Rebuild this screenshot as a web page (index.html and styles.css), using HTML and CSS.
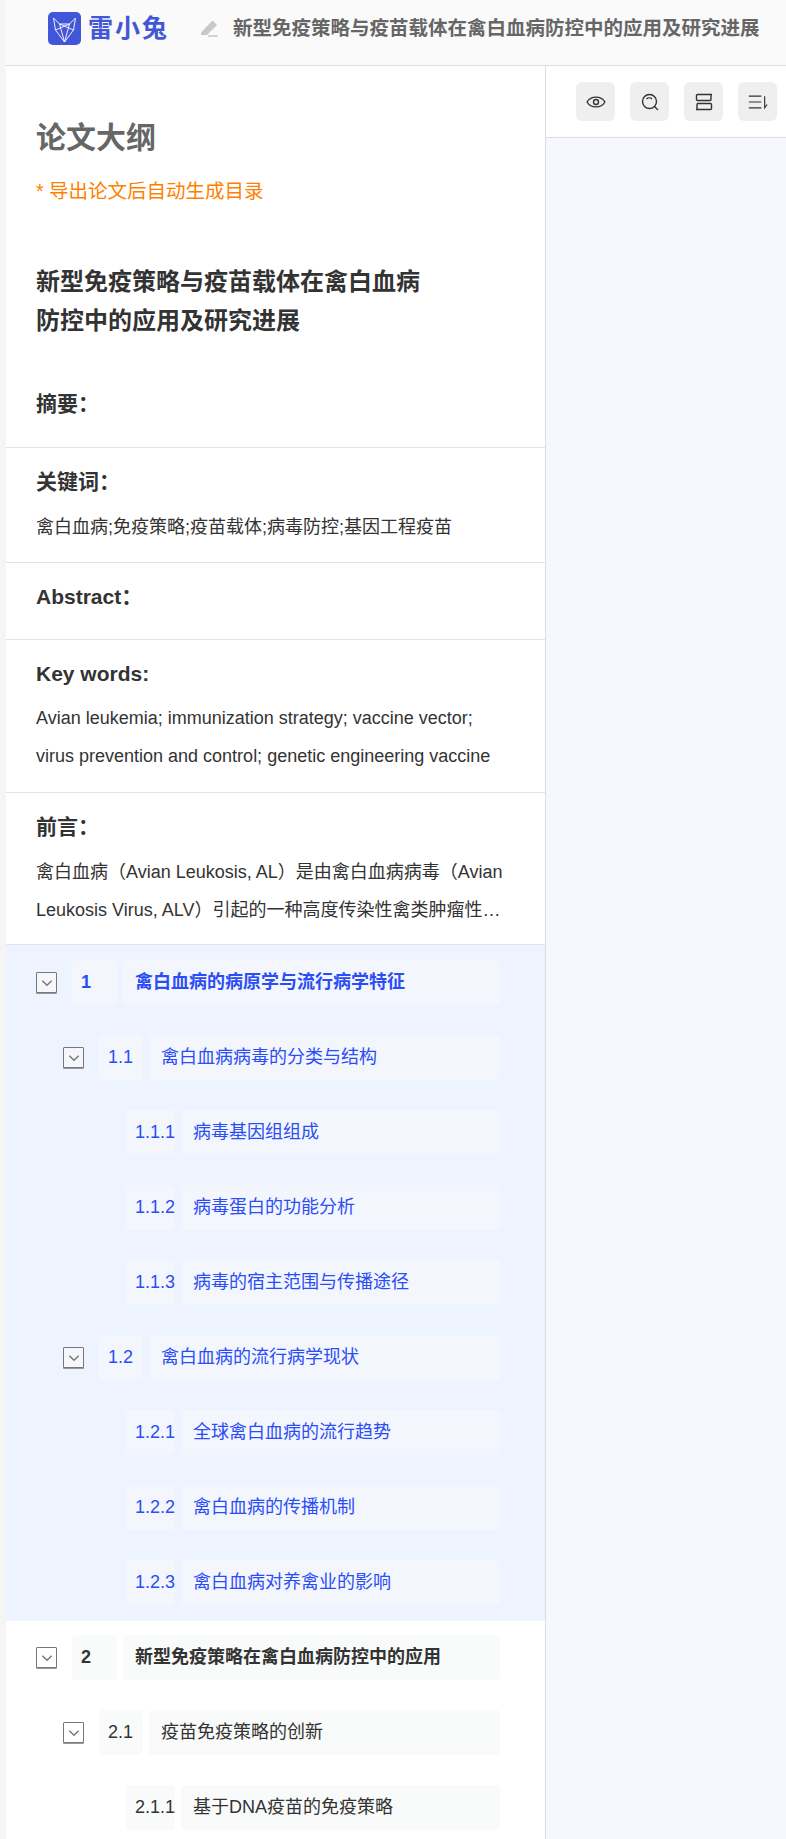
FILE: index.html
```html
<!DOCTYPE html>
<html lang="zh">
<head>
<meta charset="utf-8">
<title>雷小兔</title>
<link rel="stylesheet" href="styles.css">
</head>
<body>
<div class="app">
  <header class="topbar">
    <div class="brand">
      <svg class="logo" viewBox="0 0 33 33"><rect width="33" height="33" rx="5" fill="#4257d8"/><path d="M5.500 6l6 6h10l6-6-2 12-9 12-9-12zM11.500 12l5 18M21.500 12l-5 18M7.500 18l14-6M25.500 18l-14-6" fill="none" stroke="#fff" stroke-width=".9"/></svg>
      <span class="brand-name">雷小兔</span>
    </div>
    <svg class="pen" viewBox="0 0 18 18"><path d="M0 12.500L11.500.5 16 5 6 15H0z" fill="#c8c8c8"/><path d="M7 16h10" stroke="#c8c8c8" stroke-width="1.500"/></svg>
    <h1 class="doc-title">新型免疫策略与疫苗载体在禽白血病防控中的应用及研究进展</h1>
  </header>
  <div class="workspace">
    <aside class="outline">
      <div class="intro">
        <h2 class="outline-title">论文大纲</h2>
        <p class="hint">* 导出论文后自动生成目录</p>
        <h3 class="paper-title">新型免疫策略与疫苗载体在禽白血病<br>防控中的应用及研究进展</h3>
        <h4 class="label">摘要：</h4>
      </div>
      <section class="block block-kw">
        <h4 class="label">关键词：</h4>
        <p class="text">禽白血病;免疫策略;疫苗载体;病毒防控;基因工程疫苗</p>
      </section>
      <section class="block block-abs"><h4 class="label">Abstract：</h4></section>
      <section class="block block-en">
        <h4 class="label">Key words:</h4>
        <p class="text">Avian leukemia; immunization strategy; vaccine vector; virus prevention and control; genetic engineering vaccine</p>
      </section>
      <section class="block block-pre">
        <h4 class="label">前言：</h4>
        <p class="text clamp">禽白血病（Avian Leukosis, AL）是由禽白血病病毒（Avian Leukosis Virus, ALV）引起的一种高度传染性禽类肿瘤性疾病，对全球养禽业造成了严重的经济损失和防控压力。</p>
      </section>
      <div class="chapter active">
        <div class="row l1"><span class="toggle"><svg viewBox="0 0 12 12"><path d="M2 4l4 4 4-4"/></svg></span><span class="num">1</span><span class="name">禽白血病的病原学与流行病学特征</span></div>
        <div class="row l2"><span class="toggle"><svg viewBox="0 0 12 12"><path d="M2 4l4 4 4-4"/></svg></span><span class="num">1.1</span><span class="name">禽白血病病毒的分类与结构</span></div>
        <div class="row l3"><span class="num">1.1.1</span><span class="name">病毒基因组组成</span></div>
        <div class="row l3"><span class="num">1.1.2</span><span class="name">病毒蛋白的功能分析</span></div>
        <div class="row l3"><span class="num">1.1.3</span><span class="name">病毒的宿主范围与传播途径</span></div>
        <div class="row l2"><span class="toggle"><svg viewBox="0 0 12 12"><path d="M2 4l4 4 4-4"/></svg></span><span class="num">1.2</span><span class="name">禽白血病的流行病学现状</span></div>
        <div class="row l3"><span class="num">1.2.1</span><span class="name">全球禽白血病的流行趋势</span></div>
        <div class="row l3"><span class="num">1.2.2</span><span class="name">禽白血病的传播机制</span></div>
        <div class="row l3"><span class="num">1.2.3</span><span class="name">禽白血病对养禽业的影响</span></div>
      </div>
      <div class="chapter">
        <div class="row l1"><span class="toggle"><svg viewBox="0 0 12 12"><path d="M2 4l4 4 4-4"/></svg></span><span class="num">2</span><span class="name">新型免疫策略在禽白血病防控中的应用</span></div>
        <div class="row l2"><span class="toggle"><svg viewBox="0 0 12 12"><path d="M2 4l4 4 4-4"/></svg></span><span class="num">2.1</span><span class="name">疫苗免疫策略的创新</span></div>
        <div class="row l3"><span class="num">2.1.1</span><span class="name">基于DNA疫苗的免疫策略</span></div>
      </div>
    </aside>
    <main class="preview">
      <div class="tools">
        <button class="tool"><svg viewBox="0 0 20 20"><path d="M1 10c4-6.500 14-6.500 18 0-4 6.500-14 6.500-18 0z"/><circle cx="10" cy="10" r="2.500"/></svg></button>
        <button class="tool"><svg viewBox="0 0 20 20"><circle cx="9.500" cy="9.500" r="7"/><path d="M14.500 14.500l3.500 3.500M6.500 7c1.500-1.500 4-1.500 5.500 0"/></svg></button>
        <button class="tool"><svg viewBox="0 0 20 20"><path d="M18 2.500H3.500a1 1 0 0 0-1 1v4a1 1 0 0 0 1 1H16a1 1 0 0 0 1-1v-5zM3 11.500h13.500a1 1 0 0 1 1 1v4a1 1 0 0 1-1 1H2M3 11.500v6"/></svg></button>
        <button class="tool"><svg viewBox="0 0 24 20"><path d="M1 3h15M1 10h15M1 17h15M20 3v14l3-4"/></svg></button>
      </div>
      <div class="canvas"></div>
    </main>
  </div>
</div>
</body>
</html>
```
FILE: styles.css
```css
* { box-sizing: border-box; }
html, body { margin: 0; padding: 0; height: 100%; overflow: hidden; }
body { font-family: "Liberation Sans", "Noto Sans CJK SC", sans-serif; color: #333; background: #f5f5f5; }
.app { margin-left: 6px; height: 1839px; display: flex; flex-direction: column; background: #fff; }
.topbar { height: 66px; flex: none; display: flex; align-items: center; background: #fafafa; border-bottom: 1px solid #ddd; padding-left: 42px; padding-bottom: 8px; }
.brand { display: flex; align-items: center; gap: 7px; width: 153px; flex: none; }
.logo { width: 33px; height: 33px; flex: none; }
.brand-name { font-size: 25px; font-weight: 700; color: #4257d8; letter-spacing: 2px; line-height: 33px; white-space: nowrap; }
.pen { width: 18px; height: 18px; flex: none; }
.doc-title { margin: -1px 0 0 14px; font-size: 19.500px; font-weight: 700; color: #666; white-space: nowrap; line-height: 24px; }
.workspace { flex: 1; display: flex; min-height: 0; }
.outline { width: 540px; flex: none; border-right: 1px solid #ddd; overflow: hidden; }
.intro { padding: 52px 30px 0; height: 381px; }
.outline-title { margin: 0; font-size: 30px; line-height: 40px; font-weight: 700; color: #666; }
.hint { margin: 20px 0 0; font-size: 19.500px; line-height: 26px; color: #ff8000; }
.paper-title { margin: 58px 0 0; font-size: 24px; line-height: 39px; font-weight: 700; color: #333; }
.label { margin: 0; font-size: 21px; line-height: 28px; font-weight: 700; color: #333; }
.intro .label { margin-top: 50px; }
.block { border-top: 1px solid #e2e2e8; padding: 20px 30px 0; }
.block-kw { height: 115px; }
.block-kw .text { margin-top: 12px; }
.block-abs { height: 77px; padding-top: 20px; }
.block-en { height: 153px; padding-top: 20px; }
.block-en .text { margin-top: 11px; }
.block-pre { height: 152px; padding-top: 20px; }
.block-pre .text { margin-top: 12px; }
.text { margin: 0; font-size: 18px; line-height: 38px; color: #333; }
.clamp { display: -webkit-box; -webkit-box-orient: vertical; -webkit-line-clamp: 2; overflow: hidden; }
.chapter { padding: 15px 0 0; border-top: 1px solid #e2e2e8; }
.chapter.active { background: #edf3ff; color: #2b4df5; height: 677px; }
.chapter:not(.active) { border-top: 0; padding-top: 14px; }
.row { display: flex; align-items: center; height: 45px; margin-bottom: 30px; font-size: 18px; }
.l1 { padding-left: 30px; font-weight: 700; }
.l2 { padding-left: 57px; }
.l3 { padding-left: 120px; }
.toggle { width: 21px; height: 21px; flex: none; border: 1px solid #777; border-radius: 1px; background: #f5f7fb; display: flex; align-items: center; justify-content: center; box-shadow: 0 1px 0 #999; }
.chapter:not(.active) .toggle { background: #fff; }
.toggle svg { width: 14px; height: 14px; fill: none; stroke: #777; stroke-width: 1.200; }
.num { height: 45px; flex: none; display: flex; align-items: center; border-radius: 4px; background: #f3f6fd; padding-left: 9px; margin-right: 6px; }
.name { height: 45px; display: flex; align-items: center; border-radius: 4px; background: #f3f6fd; padding-left: 12px; padding-bottom: 5px; flex: none; white-space: nowrap; }
.chapter:not(.active) .num, .chapter:not(.active) .name { background: #f9fafa; }
.l1 .num { width: 45px; margin-left: 15px; }
.l1 .name { width: 377px; }
.l2 .num { width: 44px; margin-left: 15px; }
.l2 .name { width: 351px; }
.l3 .num { width: 49px; }
.l3 .name { width: 319px; }
.preview { flex: 1; display: flex; flex-direction: column; min-width: 0; }
.tools { height: 72px; flex: none; display: flex; gap: 15px; padding: 16px 0 0 30px; border-bottom: 1px solid #ddd; background: #fff; }
.tool { width: 39px; height: 39px; border: 0; padding: 0; border-radius: 6px; background: #efefef; display: flex; align-items: center; justify-content: center; }
.tool svg { width: 20px; height: 20px; fill: none; stroke: #333; stroke-width: 1.400; }
.canvas { flex: 1; background: #f7f8fe; }
```
